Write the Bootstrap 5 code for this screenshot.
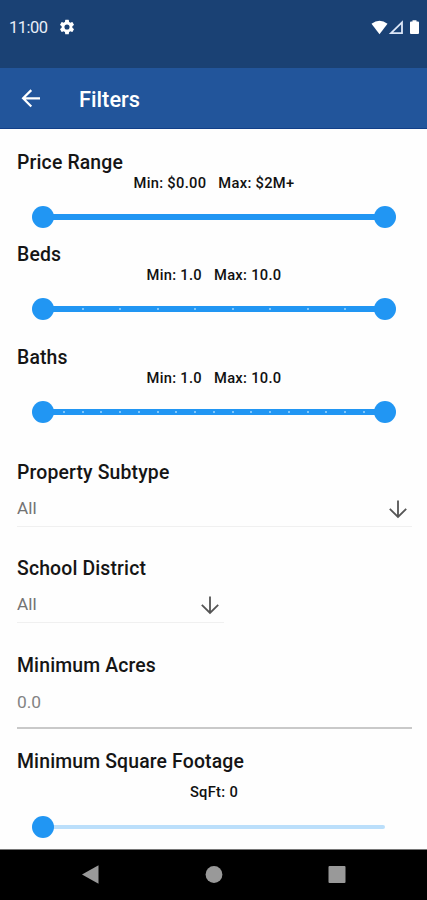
<!DOCTYPE html>
<html lang="en">
<head>
<meta charset="utf-8">
<meta name="viewport" content="width=device-width, initial-scale=1">
<title>Filters</title>
<link rel="stylesheet" href="https://cdn.jsdelivr.net/npm/bootstrap@5.3.0/dist/css/bootstrap.min.css">
<style>
  body { font-family: Roboto, "Liberation Sans", sans-serif; background: #fefefe; color: #151515; }
  .screen { height: 900px; }
  .status-bar { height: 67.5px; background: #1a4174; padding: 0 7px 12px 9px; font-size: 16.5px; }
  .clock { letter-spacing: -.5px; width: 39px; padding-top: 2px; color: #e8eef8; }
  .gear { margin-left: 10px; margin-top: -1px; }
  .app-bar { height: 61px; background: #22559b; border-bottom: 1.5px solid #123f88; padding-left: 19px; }
  .app-title { font-size: 21.8px; font-weight: 500; margin-left: 36px; padding-top: 5px; }
  .filters { padding: 24.5px 15px 0 17px; }
  .label { font-size: 19.4px; font-weight: 500; line-height: 20px; margin: 0; letter-spacing: .15px; }
  .caption { font-size: 14.7px; font-weight: 500; line-height: 18px; gap: 12px; margin-top: 1px; padding-right: 1px; letter-spacing: .3px; white-space: nowrap; color: #111; }
  .slider { height: 52px; margin-top: -1px; padding: 0 16px 0 15px; }
  .thumb { width: 22px; height: 22px; background: #2196f3; z-index: 1; }
  .track { height: 6.5px; background: #2196f3; margin: 0 -2px; padding: 0; }
  .track i { width: 2px; height: 2px; background: #80c6fa; }
  .track-idle { height: 4.5px; background: #bbdffb; margin-left: -2px; margin-right: 11px; border-radius: 0 2px 2px 0; }
  .gap-beds { margin-top: 2px; }
  .gap-baths { margin-top: 13px; }
  .gap-subtype { margin-top: 25px; }
  .gap-district { margin-top: 32px; }
  .gap-acres { margin-top: 32.500px; }
  .gap-footage { margin-top: 23.500px; }
  .caption-footage { margin-top: 11px; }
  .slider-footage { margin-top: 0; }
  .picker { height: 44px; border-bottom: 1.5px solid #f0f0f0; padding: 8px 4px 0 0; font-size: 17.2px; color: #737373; }
  .half { width: 207px; }
  .field { height: 53px; border-bottom: 2px solid #c9c9c9; font-size: 17.4px; color: #838383; padding-top: 2px; }
  .nav-keys { height: 51.5px; background: #000; border-top: 1.5px solid #777; }
</style>
<script src="https://cdn.jsdelivr.net/npm/bootstrap@5.3.0/dist/js/bootstrap.bundle.min.js"></script>
</head>
<body>
<div class="screen d-flex flex-column overflow-hidden">
  <div class="status-bar d-flex align-items-center text-white flex-shrink-0">
    <span class="clock">11:00</span>
    <svg class="gear" width="18" height="18" viewBox="0 0 24 24"><path fill="#fff" d="M19.14 12.94a7 7 0 0 0 0-1.88l2.03-1.58a.5.5 0 0 0 .12-.61l-1.92-3.32a.5.5 0 0 0-.59-.22l-2.39.96a7 7 0 0 0-1.62-.94L14.4 2.81a.48.48 0 0 0-.48-.41h-3.84a.47.47 0 0 0-.47.41l-.36 2.54a7 7 0 0 0-1.62.94l-2.39-.96a.5.5 0 0 0-.59.22L2.74 8.87a.48.48 0 0 0 .12.61l2.03 1.58a7 7 0 0 0 0 1.88l-2.03 1.58a.5.5 0 0 0-.12.61l1.92 3.32c.12.22.37.29.59.22l2.39-.96c.5.38 1.03.7 1.62.94l.36 2.54c.05.24.24.41.48.41h3.84c.24 0 .44-.17.47-.41l.36-2.54a7 7 0 0 0 1.62-.94l2.39.96c.22.08.47 0 .59-.22l1.92-3.32a.48.48 0 0 0-.12-.61zM12 15.4a3.4 3.4 0 1 1 0-6.8 3.4 3.4 0 0 1 0 6.8z"/></svg>
    <svg class="ms-auto" width="50" height="16" viewBox="0 0 50 16">
      <path fill="#fff" d="M1.500 3.800Q9.500-2.500 17.500 3.800L9.500 14.300Z"/>
      <path fill="none" stroke="#dce6f7" stroke-width="1.800" d="M21 13.200L32 2.400V13.200Z"/>
      <path fill="#fff" d="M41 1.600h1.500V.2h4V1.600H48q1 0 1 1v10.500q0 1-1 1h-7q-1 0-1-1V2.600q0-1 1-1z"/>
    </svg>
  </div>
  <header class="app-bar d-flex align-items-center text-white flex-shrink-0">
    <svg width="24" height="24" viewBox="0 0 24 24" fill="none" stroke="#fff" stroke-width="2.200"><path d="M21 12.300H4.500M12.300 4.100L4.100 12.300l8.200 8.200"/></svg>
    <h1 class="app-title mb-0">Filters</h1>
  </header>
  <main class="filters flex-grow-1 overflow-hidden">
    <section>
      <h2 class="label">Price Range</h2>
      <div class="caption d-flex justify-content-center"><span>Min: $0.00</span><span>Max: $2M+</span></div>
      <div class="slider d-flex align-items-center"><span class="thumb rounded-circle"></span><div class="track flex-grow-1"></div><span class="thumb rounded-circle"></span></div>
    </section>
    <section class="gap-beds">
      <h2 class="label">Beds</h2>
      <div class="caption d-flex justify-content-center"><span>Min: 1.0</span><span>Max: 10.0</span></div>
      <div class="slider d-flex align-items-center"><span class="thumb rounded-circle"></span><div class="track ticks flex-grow-1 d-flex align-items-center justify-content-between" data-count="8"></div><span class="thumb rounded-circle"></span></div>
    </section>
    <section class="gap-baths">
      <h2 class="label">Baths</h2>
      <div class="caption d-flex justify-content-center"><span>Min: 1.0</span><span>Max: 10.0</span></div>
      <div class="slider d-flex align-items-center"><span class="thumb rounded-circle"></span><div class="track ticks flex-grow-1 d-flex align-items-center justify-content-between" data-count="17"></div><span class="thumb rounded-circle"></span></div>
    </section>
    <section class="gap-subtype">
      <h2 class="label">Property Subtype</h2>
      <div class="picker d-flex align-items-center justify-content-between"><span>All</span>
        <svg width="20" height="20" viewBox="0 0 20 20" fill="none" stroke="#555" stroke-width="1.800"><path d="M10 1.500V18M1.800 9.800L10 18l8.200-8.200"/></svg></div>
    </section>
    <section class="gap-district">
      <h2 class="label">School District</h2>
      <div class="picker half d-flex align-items-center justify-content-between"><span>All</span>
        <svg width="20" height="20" viewBox="0 0 20 20" fill="none" stroke="#555" stroke-width="1.800"><path d="M10 1.500V18M1.800 9.800L10 18l8.200-8.200"/></svg></div>
    </section>
    <section class="gap-acres">
      <h2 class="label">Minimum Acres</h2>
      <div class="field d-flex align-items-center">0.0</div>
    </section>
    <section class="gap-footage">
      <h2 class="label">Minimum Square Footage</h2>
      <div class="caption caption-footage d-flex justify-content-center"><span>SqFt: 0</span></div>
      <div class="slider slider-footage d-flex align-items-center"><span class="thumb rounded-circle"></span><div class="track-idle flex-grow-1"></div></div>
    </section>
  </main>
  <footer class="nav-keys flex-shrink-0 d-flex justify-content-center align-items-center">
    <svg width="264" height="20" viewBox="0 0 264 20" fill="#999"><path d="M0 9.500L16.500 .3V18.700Z"/><circle cx="132" cy="9.500" r="8.400"/><rect x="246.500" y="1" width="17" height="17" rx="1"/></svg>
  </footer>
</div>
<script>
  // Slider step marks, evenly spaced between the two thumbs.
  document.querySelectorAll('.ticks').forEach(function (track) {
    var n = +track.dataset.count;
    var step = 338 / (n + 1);
    track.style.paddingLeft = track.style.paddingRight = (step - 8) + 'px';
    for (var k = 0; k < n; k++) track.appendChild(document.createElement('i'));
  });
</script>
</body>
</html>
